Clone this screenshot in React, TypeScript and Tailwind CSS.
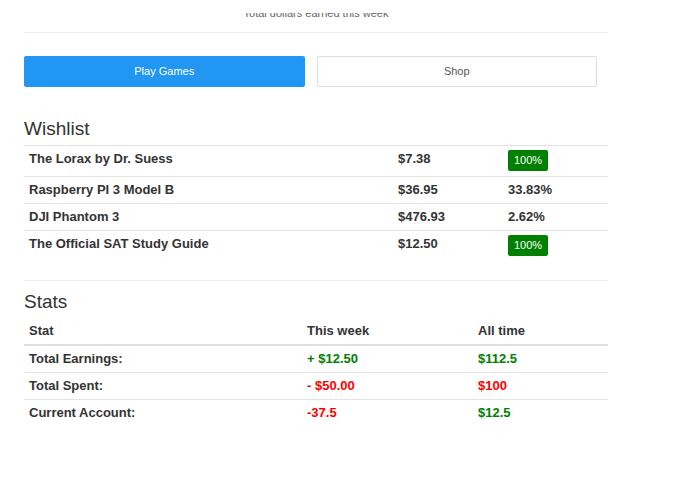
const wishlist = [
  { name: "The Lorax by Dr. Suess", price: "$7.38", progress: "100%", done: true },
  { name: "Raspberry PI 3 Model B", price: "$36.95", progress: "33.83%", done: false },
  { name: "DJI Phantom 3", price: "$476.93", progress: "2.62%", done: false },
  { name: "The Official SAT Study Guide", price: "$12.50", progress: "100%", done: true },
];

const stats = [
  { label: "Total Earnings:", week: "+ $12.50", weekUp: true, all: "$112.5", allUp: true },
  { label: "Total Spent:", week: "- $50.00", weekUp: false, all: "$100", allUp: false },
  { label: "Current Account:", week: "-37.5", weekUp: false, all: "$12.5", allUp: true },
];

const cell = "px-[5px] pt-1 pb-[5px] align-top text-left leading-[17px]";
const head = "px-[5px] pt-1 pb-[5px] text-left leading-[17px]";

export default function App() {
  return (
    <div className="min-h-[494px] bg-white font-['Liberation_Sans',Arial,sans-serif] text-[#333]">
      <div className="ml-[24px] w-[584px]">
        {/* summary caption, scrolled mostly out of view */}
        <div className="pt-[13px]">
          <div className="h-[20px] overflow-hidden border-b border-[#eee]">
            <p className="-mt-[5px] text-center text-[11px] leading-[11px] text-[#666]">
              Total dollars earned this week
            </p>
          </div>
        </div>

        <div className="mt-[23px] grid w-[573px] grid-cols-2 gap-3">
          <button className="h-[31px] rounded-[2px] bg-[#2196f3] text-[11px] text-white">
            Play Games
          </button>
          <button className="h-[31px] rounded-[2px] border border-[#dedede] bg-white text-[11px] text-[#555]">
            Shop
          </button>
        </div>

        <h2 className="mt-[31px] mb-[5px] text-[19px] leading-[22px]">Wishlist</h2>
        <table className="w-full table-fixed text-[13px] font-bold">
          <colgroup>
            <col className="w-[369px]" />
            <col className="w-[110px]" />
            <col className="w-[105px]" />
          </colgroup>
          <tbody>
            {wishlist.map((w) => (
              <tr key={w.name} className="border-t border-[#e4e4e4]">
                <td className={cell}>{w.name}</td>
                <td className={cell}>{w.price}</td>
                <td className={cell}>
                  {w.done ? (
                    <span className="inline-block h-[21px] w-[40px] rounded-[2px] bg-[#008000] text-center align-top text-[11px] leading-[21px] font-normal text-white">
                      {w.progress}
                    </span>
                  ) : (
                    w.progress
                  )}
                </td>
              </tr>
            ))}
          </tbody>
        </table>

        <div className="mt-[19px] border-t border-[#eee]" />

        <h2 className="mt-[10px] mb-[5px] text-[19px] leading-[22px]">Stats</h2>
        <table className="w-full table-fixed text-[13px] font-bold">
          <colgroup>
            <col className="w-[278px]" />
            <col className="w-[171px]" />
            <col className="w-[135px]" />
          </colgroup>
          <thead>
            <tr className="border-b-2 border-[#e0e0e0]">
              <th className={head}>Stat</th>
              <th className={head}>This week</th>
              <th className={head}>All time</th>
            </tr>
          </thead>
          <tbody>
            {stats.map((s, i) => (
              <tr key={s.label} className={i === 0 ? "" : "border-t border-[#e4e4e4]"}>
                <td className={cell}>{s.label}</td>
                <td className={`${cell} ${s.weekUp ? "text-[#008000]" : "text-[#f00]"}`}>{s.week}</td>
                <td className={`${cell} ${s.allUp ? "text-[#008000]" : "text-[#f00]"}`}>{s.all}</td>
              </tr>
            ))}
          </tbody>
        </table>
      </div>
    </div>
  );
}
